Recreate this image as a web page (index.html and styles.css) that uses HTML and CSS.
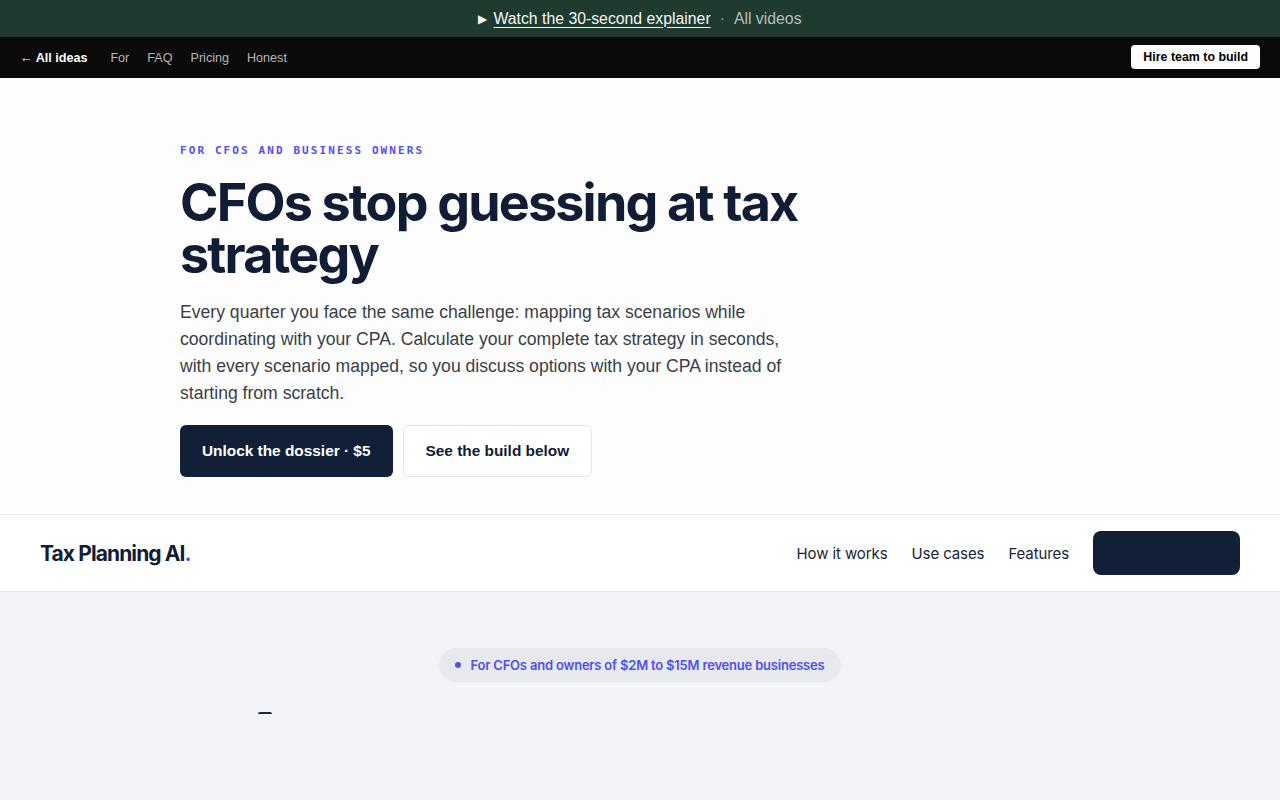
FILE: index.html
```html
<!DOCTYPE html>
<html lang="en">
<head>
<meta charset="utf-8" />
<meta name="viewport" content="width=device-width, initial-scale=1" />
<title>Tax Planning AI</title>
<link rel="stylesheet" href="styles.css">
</head>
<body>
  <div class="promo">
    <span class="promo-play">&#9654;</span>
    <a href="#" class="promo-link">Watch the 30-second explainer</a>
    <span class="promo-sep">&middot;</span>
    <a href="#" class="promo-all">All videos</a>
  </div>

  <nav class="topnav">
    <div class="topnav-links">
      <a href="#" class="back">&larr; All ideas</a>
      <a href="#">For</a>
      <a href="#">FAQ</a>
      <a href="#">Pricing</a>
      <a href="#">Honest</a>
    </div>
    <a href="#" class="hire">Hire team to build</a>
  </nav>

  <header class="hero">
    <div class="hero-inner">
      <p class="eyebrow">For CFOs and business owners</p>
      <h1>CFOs stop guessing at tax strategy</h1>
      <p class="lead">Every quarter you face the same challenge: mapping tax scenarios while coordinating with your CPA. Calculate your complete tax strategy in seconds, with every scenario mapped, so you discuss options with your CPA instead of starting from scratch.</p>
      <div class="hero-actions">
        <a href="#" class="btn btn-dark">Unlock the dossier &middot; $5</a>
        <a href="#" class="btn btn-light">See the build below</a>
      </div>
    </div>
  </header>

  <div class="sitebar">
    <div class="brand">Tax Planning AI<span class="brand-dot">.</span></div>
    <div class="sitebar-right">
      <a href="#">How it works</a>
      <a href="#">Use cases</a>
      <a href="#">Features</a>
      <a href="#" class="sitebar-cta"></a>
    </div>
  </div>

  <main class="preview">
    <div class="pill"><span class="pill-dot"></span>For CFOs and owners of $2M to $15M revenue businesses</div>
    <div class="preview-peek"><span></span></div>
  </main>
</body>
</html>
```

FILE: styles.css
```css
body {
  margin: 0;
  font-family: "Liberation Sans", Arial, sans-serif;
  color: #111;
  background: #f3f4f8;
}
a {
  text-decoration: none;
  color: inherit;
}

/* promo strip */
.promo {
  height: 37px;
  background: #1f3a2e;
  display: flex;
  align-items: center;
  justify-content: center;
  gap: 6px;
  font-size: 15.8px;
  color: #f2f2f2;
}
.promo-play {
  font-size: 12px;
}
.promo-link {
  text-decoration: underline;
  text-underline-offset: 3px;
  color: #f5f5f5;
}
.promo-sep {
  color: #8a9a90;
  margin: 0 3px;
}
.promo-all {
  color: #b6bfb9;
}

/* top nav */
.topnav {
  height: 41px;
  background: #0a0a0a;
  display: flex;
  align-items: center;
  justify-content: space-between;
  padding: 0 20px;
  font-size: 12.6px;
}
.topnav-links {
  display: flex;
  gap: 18px;
  color: #b8b8b8;
}
.topnav-links .back {
  color: #fff;
  font-weight: bold;
  margin-right: 5px;
}
.hire {
  background: #fff;
  color: #000;
  font-weight: bold;
  font-size: 12.4px;
  padding: 5px 12px;
  border-radius: 4px;
  margin-top: -2px;
}

/* hero */
.hero {
  background: #fdfdfd;
  border-bottom: 1px solid #ececef;
  padding: 66px 0 37px;
}
.hero-inner {
  width: 640px;
  margin-left: 180px;
}
.eyebrow {
  margin: 0 0 20px;
  font-family: "DejaVu Sans Mono", monospace;
  font-weight: bold;
  font-size: 11px;
  letter-spacing: 2.1px;
  text-transform: uppercase;
  color: #5250e8;
}
h1 {
  margin: 0;
  font-family: Inter, "Noto Sans", sans-serif;
  font-size: 52px;
  line-height: 52px;
  font-weight: 700;
  letter-spacing: -1.8px;
  color: #111d34;
  width: 640px;
}
.lead {
  margin: 18px 0 18px;
  font-size: 17.6px;
  line-height: 27px;
  color: #3a3f47;
  width: 625px;
}
.hero-actions {
  display: flex;
  gap: 10px;
}
.btn {
  height: 52px;
  box-sizing: border-box;
  display: inline-flex;
  align-items: center;
  padding: 0 22px;
  border-radius: 6px;
  font-size: 15.4px;
  font-weight: bold;
}
.btn-dark {
  background: #111f37;
  color: #fff;
}
.btn-light {
  background: #fff;
  color: #111d34;
  border: 1px solid #e3e5ea;
}

/* site bar */
.sitebar {
  height: 76px;
  background: #fff;
  border-bottom: 1px solid #e3e5ea;
  display: flex;
  align-items: center;
  justify-content: space-between;
  padding: 0 40px;
}
.brand {
  font-family: Inter, "Noto Sans", sans-serif;
  font-weight: 700;
  font-size: 21px;
  letter-spacing: -0.9px;
  color: #111d34;
}
.brand-dot {
  color: #5250e8;
}
.sitebar-right {
  display: flex;
  align-items: center;
  gap: 24px;
  font-family: Inter, "Noto Sans", sans-serif;
  font-size: 15px;
  letter-spacing: -0.1px;
  color: #1c2333;
}
.sitebar-cta {
  width: 147px;
  height: 44px;
  background: #111f37;
  border-radius: 8px;
}

/* preview */
.preview {
  padding-top: 56px;
  display: flex;
  flex-direction: column;
  align-items: center;
  height: 200px;
}
.pill {
  display: flex;
  align-items: center;
  gap: 9px;
  height: 34px;
  padding: 0 16px;
  border-radius: 17px;
  background: #e8e9ee;
  font-family: Inter, "Noto Sans", sans-serif;
  font-weight: 600;
  font-size: 13px;
  letter-spacing: -0.2px;
  color: #4e52e6;
}
.pill-dot {
  width: 6px;
  height: 6px;
  border-radius: 50%;
  background: #4e52e6;
}
.preview-peek {
  align-self: stretch;
  padding: 30px 0 0 258px;
}
.preview-peek span {
  display: block;
  width: 14px;
  height: 2px;
  border-radius: 2px 2px 0 0;
  background: #1c2a44;
}
```
